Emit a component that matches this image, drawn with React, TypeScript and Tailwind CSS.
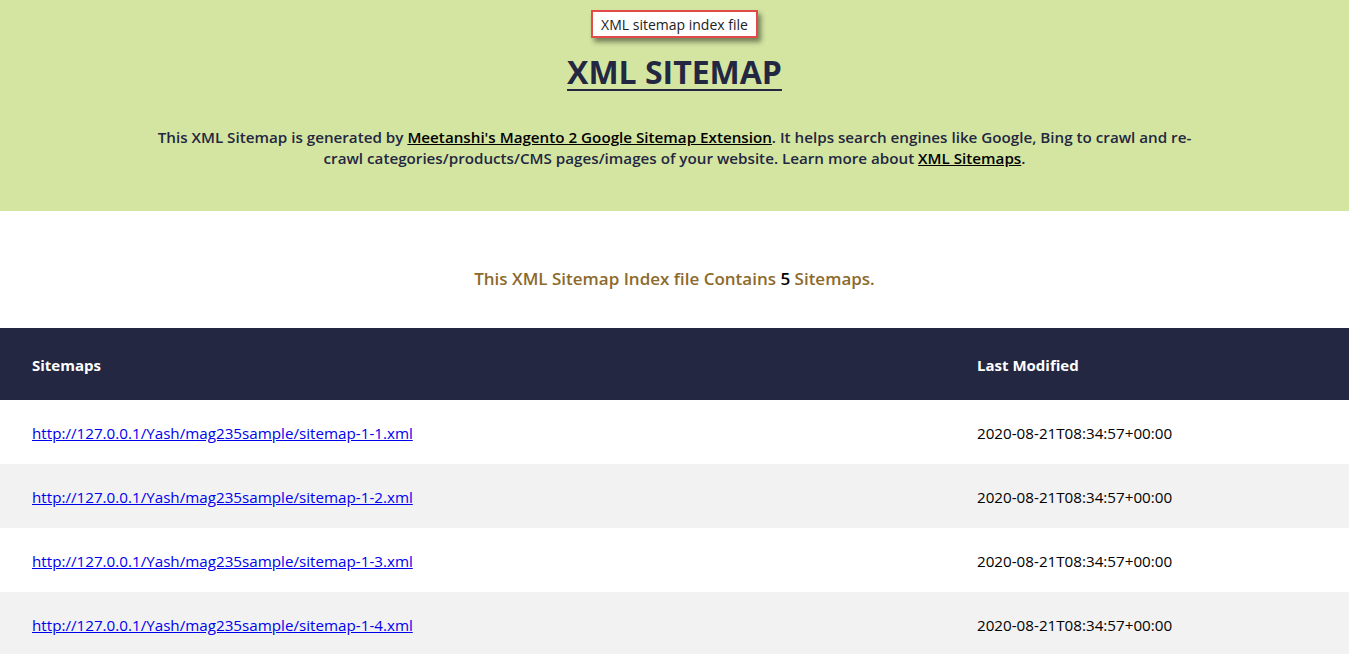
import React from "react";

const rows = [1, 2, 3, 4, 5].map((n) => ({
  url: `http://127.0.0.1/Yash/mag235sample/sitemap-1-${n}.xml`,
  date: "2020-08-21T08:34:57+00:00",
}));

export default function App() {
  return (
    <div className="min-h-screen bg-white" style={{ fontFamily: '"Open Sans", "Noto Sans", sans-serif' }}>
      <header className="bg-[#d4e5a1] h-[211px] flex flex-col items-center pt-[10px]">
        <div className="border-2 border-[#e34b4b] bg-white px-[8px] h-[28px] flex items-center text-[14px] text-[#222] shadow-[3px_4px_5px_rgba(0,0,0,0.45)]">
          XML sitemap index file
        </div>
        <h1 className="mt-[14px] text-[32px] leading-[40px] font-bold text-[#232741] underline underline-offset-[5px] decoration-[2px]">
          XML SITEMAP
        </h1>
        <p className="mt-[35px] text-center text-[15.2px] leading-[21px] font-semibold text-[#232741]">
          This XML Sitemap is generated by{" "}
          <a href="#" className="text-black underline">Meetanshi's Magento 2 Google Sitemap Extension</a>. It helps search engines like Google, Bing to crawl and re-
          <br />
          crawl categories/products/CMS pages/images of your website. Learn more about{" "}
          <a href="#" className="text-black underline">XML Sitemaps</a>.
        </p>
      </header>
      <div className="h-[117px] flex items-center justify-center pt-[18px]">
        <p className="text-[17px] font-semibold text-[#8c6a2c]">
          This XML Sitemap Index file Contains <span className="text-black">5</span> Sitemaps.
        </p>
      </div>
      <table className="w-full border-collapse">
        <thead>
          <tr className="bg-[#232741] h-[72px] text-white text-[15px] font-bold text-left">
            <th className="pl-[32px] pt-[2px] font-bold">Sitemaps</th>
            <th className="w-[372px] pt-[2px] font-bold">Last Modified</th>
          </tr>
        </thead>
        <tbody>
          {rows.map((r, i) => (
            <tr key={i} className={`h-[64px] text-[15.2px] ${i % 2 === 1 ? "bg-[#f2f2f2]" : "bg-white"}`}>
              <td className="pl-[32px] pt-[2px]">
                <a href="#" className="text-[#0000ee] underline">{r.url}</a>
              </td>
              <td className="text-black pt-[2px]">{r.date}</td>
            </tr>
          ))}
        </tbody>
      </table>
    </div>
  );
}
